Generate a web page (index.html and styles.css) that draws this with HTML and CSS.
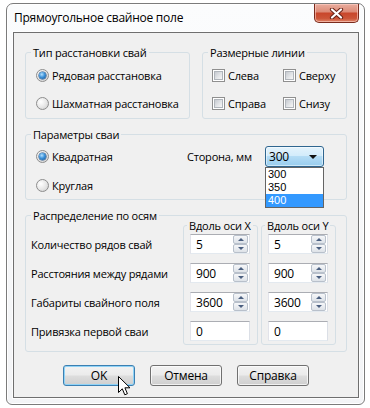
FILE: index.html
```html
<!DOCTYPE html>
<html lang="ru">
<head>
<meta charset="utf-8">
<title>Прямоугольное свайное поле</title>
<link rel="stylesheet" href="styles.css">
</head>
<body>
<div class="window">
  <div class="titlebar">
    <span class="title">Прямоугольное свайное поле</span>
    <span class="close">
      <svg width="15" height="11" viewBox="0 0 15 11">
        <path d="M3 1.5 L12 9.5 M12 1.5 L3 9.5" stroke="#6a2418" stroke-width="4.2" stroke-linecap="round" fill="none"/>
        <path d="M3 1.5 L12 9.5 M12 1.5 L3 9.5" stroke="#ffffff" stroke-width="2.2" stroke-linecap="round" fill="none"/>
      </svg>
    </span>
  </div>
  <div class="client">
    <div class="toprow">
      <fieldset class="group g-type">
        <legend>Тип расстановки свай</legend>
        <div class="opts">
          <label class="opt"><span class="radio checked"></span>Рядовая расстановка</label>
          <label class="opt"><span class="radio"></span>Шахматная расстановка</label>
        </div>
      </fieldset>
      <fieldset class="group g-dim">
        <legend>Размерные линии</legend>
        <div class="checks">
          <label class="opt"><span class="check"></span>Слева</label>
          <label class="opt"><span class="check"></span>Сверху</label>
          <label class="opt"><span class="check"></span>Справа</label>
          <label class="opt"><span class="check"></span>Снизу</label>
        </div>
      </fieldset>
    </div>

    <fieldset class="group g-params">
      <legend>Параметры сваи</legend>
      <div class="params">
        <label class="opt"><span class="radio checked"></span>Квадратная</label>
        <span class="side-label">Сторона, мм</span>
        <div class="combo-wrap">
          <div class="combo"><span>300</span><span class="arrow"></span></div>
          <ul class="dropdown">
            <li>300</li>
            <li>350</li>
            <li class="sel">400</li>
          </ul>
        </div>
        <label class="opt"><span class="radio"></span>Круглая</label>
      </div>
    </fieldset>

    <fieldset class="group g-dist">
      <legend>Распределение по осям</legend>
      <div class="dist">
        <div class="labels">
          <span>Количество рядов свай</span>
          <span>Расстояния между рядами</span>
          <span>Габариты свайного поля</span>
          <span>Привязка первой сваи</span>
        </div>
        <fieldset class="axis">
          <legend>Вдоль оси X</legend>
          <div class="fields">
            <div class="field"><span>5</span><span class="btns"><span class="sb up"></span><span class="sb dn"></span></span></div>
            <div class="field"><span>900</span><span class="btns"><span class="sb up"></span><span class="sb dn"></span></span></div>
            <div class="field"><span>3600</span><span class="btns"><span class="sb up"></span><span class="sb dn"></span></span></div>
            <div class="field"><span>0</span></div>
          </div>
        </fieldset>
        <fieldset class="axis">
          <legend>Вдоль оси Y</legend>
          <div class="fields">
            <div class="field"><span>5</span><span class="btns"><span class="sb up"></span><span class="sb dn"></span></span></div>
            <div class="field"><span>900</span><span class="btns"><span class="sb up"></span><span class="sb dn"></span></span></div>
            <div class="field"><span>3600</span><span class="btns"><span class="sb up"></span><span class="sb dn"></span></span></div>
            <div class="field"><span>0</span></div>
          </div>
        </fieldset>
      </div>
    </fieldset>

    <div class="buttons">
      <span class="btn default">OK
        <svg class="cursor" width="14" height="21" viewBox="0 0 14 21">
          <path d="M0.5 0.5 L0.5 16.5 L4.3 12.8 L6.8 18.8 L9.4 17.7 L6.9 11.8 L12 11.8 Z" fill="#ffffff" stroke="#000000" stroke-width="1" stroke-linejoin="miter"/>
        </svg>
      </span>
      <span class="btn">Отмена</span>
      <span class="btn">Справка</span>
    </div>
  </div>
</div>
</body>
</html>
```

FILE: styles.css
```css
* { box-sizing: border-box; }

body {
  margin: 0;
  background: #ffffff;
  font-family: "Open Sans", "Noto Sans", sans-serif;
  font-size: 11px;
  letter-spacing: -0.2px;
  color: #000;
}

.window {
  margin: 3px 0 0 6px;
  width: 359px;
  height: 402px;
  border: 1px solid #7b7b7b;
  border-radius: 7px 7px 6px 6px;
  background: linear-gradient(#fbfcfd, #f3f4f6);
  box-shadow: inset 0 0 0 1px #ffffff;
  padding: 0 5px 6px 6px;
  display: flex;
  flex-direction: column;
}

.titlebar {
  height: 28px;
  flex: none;
  display: flex;
  justify-content: space-between;
  align-items: flex-start;
}

.title {
  margin: 6px 0 0 1px;
  font-size: 12px;
  line-height: 16px;
  letter-spacing: -0.25px;
  text-shadow: 0 0 6px #fff, 0 0 3px #fff;
}

.close {
  width: 45px;
  height: 19px;
  border: 1px solid #7a2b1d;
  border-top: none;
  border-radius: 0 0 5px 5px;
  background: linear-gradient(#e9ad9f 0%, #dd8c78 42%, #c9472c 52%, #cc5538 80%, #e0866a 100%);
  box-shadow: inset 0 0 0 1px rgba(255, 210, 200, 0.6);
  display: flex;
  align-items: center;
  justify-content: center;
}

.client {
  flex: 1;
  border: 1px solid #6f6f6f;
  background: #f0f0f0;
  box-shadow: 0 0 0 1px rgba(255, 255, 255, 0.8);
  padding: 12px 11px 10px 11px;
  display: flex;
  flex-direction: column;
}

fieldset {
  margin: 0;
  padding: 0;
  min-width: 0;
  border: 1px solid #d5dfe5;
  border-radius: 3px;
}

legend {
  padding: 0 2px;
  margin-left: 5px;
  line-height: 15px;
}

.toprow {
  display: flex;
  gap: 12px;
}

.g-type { width: 165px; flex: none; }
.g-dim { flex: 1; }

.opts {
  display: flex;
  flex-direction: column;
  gap: 8px;
  padding: 5px 10px;
}

.opt {
  display: flex;
  align-items: center;
  gap: 3px;
  height: 20px;
  white-space: nowrap;
}

.checks {
  display: grid;
  grid-template-columns: 71px auto;
  grid-auto-rows: 20px;
  row-gap: 8px;
  padding: 5px 9px;
}

.radio {
  width: 13px;
  height: 13px;
  flex: none;
  border-radius: 50%;
  border: 1px solid #8d8d8d;
  background: radial-gradient(circle at 35% 35%, #ffffff 0%, #e6e6e6 55%, #c9c9c9 100%);
  display: flex;
  align-items: center;
  justify-content: center;
}

.radio.checked::after {
  content: "";
  width: 7px;
  height: 7px;
  border-radius: 50%;
  background: radial-gradient(circle at 40% 35%, #b5e0fd 0%, #3d93da 45%, #114c8e 100%);
  box-shadow: 0 0 0 0.5px #17477c;
}

.check {
  width: 13px;
  height: 13px;
  flex: none;
  border: 1px solid #8f8f8f;
  background: #ffffff;
  padding: 1px;
  display: flex;
}

.check::after {
  content: "";
  flex: 1;
  border: 1px solid #b0b5bb;
  background: linear-gradient(135deg, #c6cad0 0%, #e2e4e7 55%, #f7f7f7 100%);
}

.g-params { margin-top: 8px; }

.params {
  display: grid;
  grid-template-columns: 151px 78px 59px;
  grid-template-rows: 21px 21px;
  row-gap: 8px;
  align-items: center;
  padding: 4px 10px 3px;
}

.combo-wrap {
  position: relative;
  height: 21px;
  z-index: 2;
}

.combo {
  height: 21px;
  border: 1px solid #2f6690;
  border-radius: 3px;
  background: linear-gradient(#e4f3fc 0%, #d3ecfb 45%, #b4dcf5 50%, #98cdee 100%);
  box-shadow: inset 0 0 0 1px rgba(255, 255, 255, 0.5);
  display: flex;
  align-items: center;
  justify-content: space-between;
  padding: 0 6px 0 3px;
  font-size: 12px;
}

.arrow {
  width: 0;
  height: 0;
  border-left: 4px solid transparent;
  border-right: 4px solid transparent;
  border-top: 4px solid #111;
}

.dropdown {
  position: absolute;
  top: 21px;
  left: 0;
  width: 59px;
  margin: 0;
  padding: 0;
  list-style: none;
  background: #ffffff;
  border: 1px solid #646464;
  font-family: "Liberation Sans", sans-serif;
  font-size: 11px;
  letter-spacing: 0;
}

.dropdown li {
  height: 13px;
  line-height: 13px;
  padding-left: 2px;
  overflow: hidden;
}

.dropdown li.sel {
  background: #3399ff;
  color: #ffffff;
}

.g-dist { margin-top: 8px; }

.dist {
  display: grid;
  grid-template-columns: 149px 75px 75px;
  column-gap: 3px;
  margin-top: -5px;
  padding: 0 0 6px 5px;
}

.labels {
  display: flex;
  flex-direction: column;
  gap: 9px;
  padding-top: 16px;
}

.labels span {
  height: 20px;
  line-height: 21px;
  white-space: nowrap;
}

.axis legend { margin-left: 3px; }

.fields {
  display: flex;
  flex-direction: column;
  gap: 9px;
  padding: 1px 7px 3px 6px;
}

.field {
  width: 60px;
  height: 20px;
  border: 1px solid;
  border-color: #abadb3 #dbdfe6 #e3e9ef #e2e3ea;
  background: #ffffff;
  display: flex;
  align-items: center;
  justify-content: space-between;
  padding-left: 5px;
  font-size: 12px;
}

.btns {
  display: flex;
  flex-direction: column;
  margin-right: 1px;
}

.sb {
  width: 15px;
  height: 9px;
  border: 1px solid #b8c0cb;
  border-radius: 2px;
  background: linear-gradient(#f6f7f9, #dde2e8);
  display: flex;
  align-items: center;
  justify-content: center;
}

.sb.up::after {
  content: "";
  border-left: 3px solid transparent;
  border-right: 3px solid transparent;
  border-bottom: 3px solid #4a5f80;
}

.sb.dn::after {
  content: "";
  border-left: 3px solid transparent;
  border-right: 3px solid transparent;
  border-top: 3px solid #4a5f80;
}

.buttons {
  margin-top: 13px;
  display: flex;
  justify-content: center;
  gap: 15px;
}

.btn {
  position: relative;
  width: 72px;
  height: 21px;
  border: 1px solid #707070;
  border-radius: 3px;
  background: linear-gradient(#f2f2f2 0%, #ebebeb 48%, #dddddd 52%, #cfcfcf 100%);
  box-shadow: inset 0 0 0 1px rgba(255, 255, 255, 0.7);
  display: flex;
  align-items: center;
  justify-content: center;
  font-size: 12px;
}

.btn.default {
  border-color: #3c7fb1;
  box-shadow: inset 0 0 0 1px #8fd3f7;
}

.cursor {
  position: absolute;
  left: 54px;
  top: 10px;
}
```
